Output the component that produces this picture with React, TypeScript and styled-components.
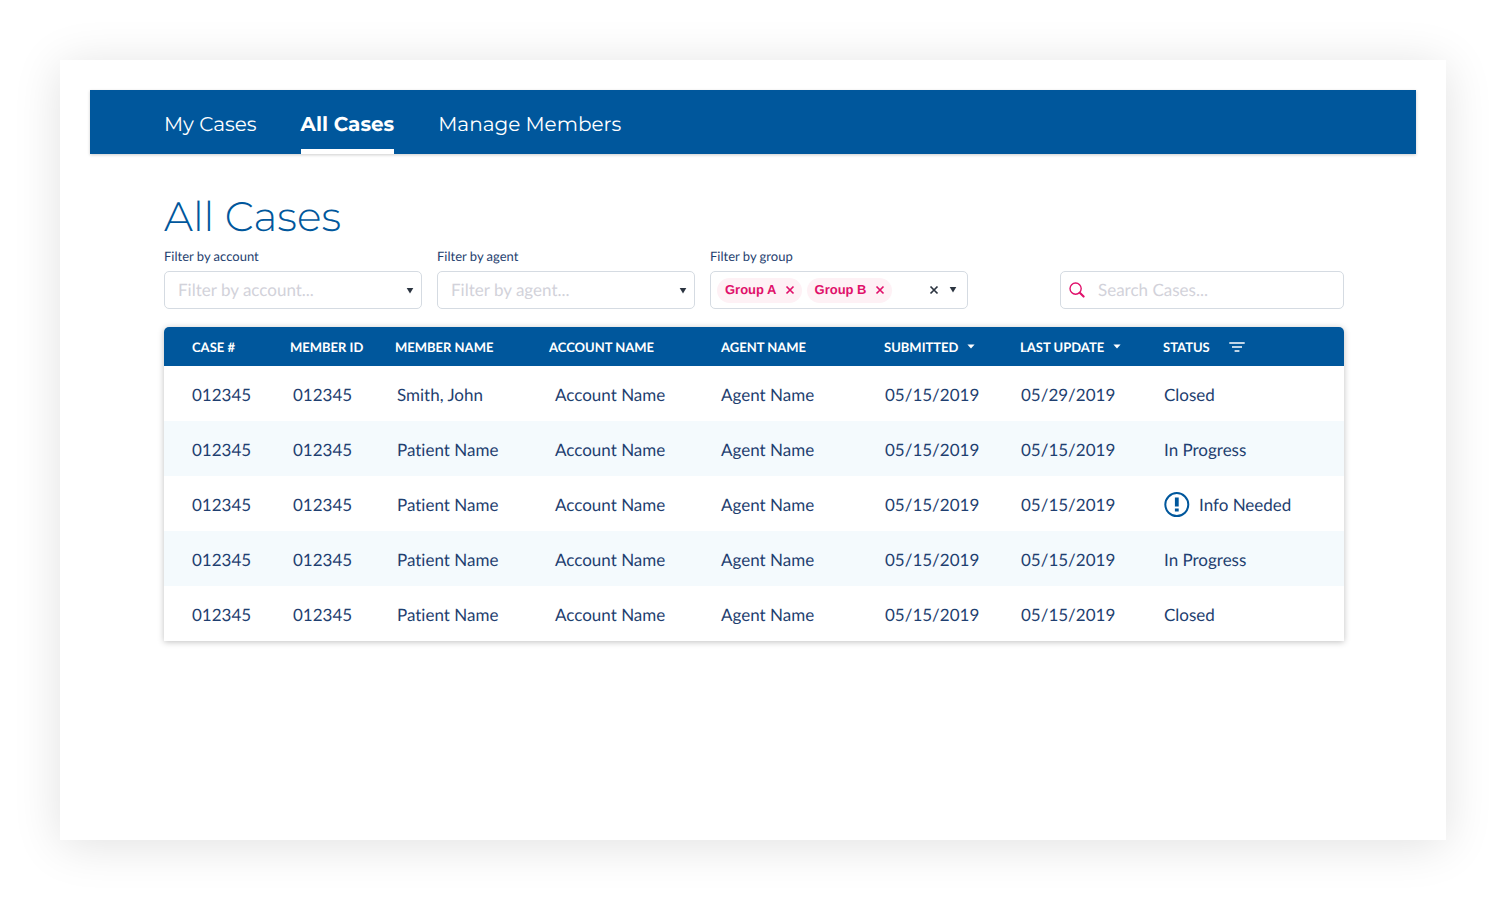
import React, { useState } from "react";
import styled, { createGlobalStyle } from "styled-components";

const color = {
  blue: "#00579c",
  navy: "#1f3f70",
  pink: "#e0116b",
  blush: "#fef1f5",
  border: "#d5dbe2",
  hint: "#d2d2da",
  stripe: "#f4fafd",
  ink: "#2b3440",
};

const heading = `Montserrat, Inter, "Open Sans", sans-serif`;
const text = `Lato, "Open Sans", sans-serif`;

const GlobalStyle = createGlobalStyle`
  * { box-sizing: border-box; }
  body {
    margin: 0;
    background: #fff;
    color: ${color.navy};
    font-family: ${text};
    font-variant-ligatures: none;
    text-rendering: geometricPrecision;
  }
  button, input, select { font: inherit; color: inherit; text-rendering: inherit; }
`;

const Page = styled.div`
  min-height: 100vh;
  padding: 60px;
  display: flex;
`;

const Sheet = styled.div`
  flex: 1;
  min-width: 0;
  padding: 30px;
  background: #fff;
  box-shadow: 0 5px 45px rgba(0, 0, 0, 0.12);
`;

const NavBar = styled.nav`
  display: flex;
  gap: 44px;
  height: 64px;
  padding-left: 74px;
  background: ${color.blue};
  box-shadow: 0 1px 3px rgba(0, 0, 0, 0.2);
`;

const NavLink = styled.a<{ $active?: boolean }>`
  display: flex;
  align-items: center;
  padding-top: 10px;
  border-bottom: 5px solid ${(p) => (p.$active ? "#fff" : "transparent")};
  color: #fff;
  font: ${(p) => (p.$active ? 700 : 400)} 20px/24px ${heading};
  text-decoration: none;
`;

const Main = styled.main`
  padding: 36px 72px 0 74px;
`;

const Title = styled.h1`
  margin: 0;
  color: ${color.blue};
  font: 300 41px/54px ${heading};
`;

const Filters = styled.form`
  display: flex;
  align-items: flex-end;
  gap: 15px;
  padding: 4px 0 18px;
`;

const Field = styled.div`
  display: flex;
  flex-direction: column;
  gap: 7px;
  flex: 0 1 258px;
  min-width: 0;
`;

const Label = styled.label`
  font-size: 13px;
  line-height: 16px;
`;

const Control = styled.div`
  position: relative;
  display: flex;
  align-items: center;
  height: 38px;
  border: 1px solid ${color.border};
  border-radius: 5px;
  background: #fff;
`;

const Select = styled.select`
  width: 100%;
  height: 100%;
  padding: 0 28px 2px 13px;
  border: 0;
  background: transparent;
  appearance: none;
  color: ${color.hint};
  font-size: 17px;
`;

const SelectArrow = styled.svg`
  position: absolute;
  right: 7px;
  top: 15px;
  pointer-events: none;
`;

const Tags = styled.div`
  display: flex;
  gap: 5px;
  flex: 1;
  padding-left: 6px;
`;

const Tag = styled.span`
  display: flex;
  align-items: center;
  gap: 8px;
  height: 25px;
  padding: 0 7px 0 8px;
  border-radius: 13px;
  background: ${color.blush};
  color: ${color.pink};
  font: 700 13px/16px "Liberation Sans", sans-serif;
`;

const IconButton = styled.button`
  display: flex;
  align-items: center;
  padding: 0;
  border: 0;
  background: none;
  color: inherit;
  cursor: pointer;
`;

const TagActions = styled.div`
  display: flex;
  gap: 10px;
  padding-right: 10px;
  color: ${color.ink};
`;

const Search = styled(Control)`
  flex: 0 1 284px;
  margin-left: auto;
  gap: 13px;
  padding: 0 8px;
`;

const SearchInput = styled.input`
  flex: 1;
  min-width: 0;
  padding: 0 0 2px;
  border: 0;
  outline: 0;
  background: transparent;
  font-size: 17px;
  &::placeholder { color: ${color.hint}; opacity: 1; }
`;

const TableCard = styled.div`
  border-radius: 5px 5px 0 0;
  overflow: hidden;
  box-shadow: 0 1px 6px rgba(0, 0, 0, 0.25);
`;

const Table = styled.table`
  width: 100%;
  table-layout: fixed;
  border-collapse: collapse;
`;

const Col = styled.col<{ $width: number }>`
  width: ${(p) => p.$width}px;
`;

const HeadCell = styled.th<{ $first: boolean }>`
  height: 39px;
  padding: 0 0 0 ${(p) => (p.$first ? 28 : 0)}px;
  background: ${color.blue};
  color: #fff;
  font-size: 13px;
  line-height: 16px;
  text-align: left;
  white-space: nowrap;
`;

const HeadContent = styled.span<{ $gap: number }>`
  display: flex;
  align-items: center;
  gap: ${(p) => p.$gap}px;
`;

const Row = styled.tr`
  &:nth-child(even) { background: ${color.stripe}; }
`;

const Cell = styled.td<{ $inset: number }>`
  height: 55px;
  padding: 3px 0 0 ${(p) => p.$inset}px;
  font-size: 17px;
  line-height: 20px;
  white-space: nowrap;
`;

const Status = styled.span`
  display: flex;
  align-items: center;
  gap: 9px;
`;

const Cross = () => (
  <svg width="10" height="10" viewBox="0 0 10 10" stroke="currentColor" strokeWidth="1.7" aria-hidden="true">
    <path d="M1.5 1.5 8.5 8.5M8.5 1.5 1.5 8.5" />
  </svg>
);

const arrowPath = "M.7 1H7.3L4 6.6Z";

const FilterSelect = ({ id, label, hint }: { id: string; label: string; hint: string }) => (
  <Field>
    <Label htmlFor={id}>{label}</Label>
    <Control>
      <Select id={id}>
        <option>{hint}</option>
      </Select>
      <SelectArrow width="8" height="8" viewBox="0 0 8 8" fill={color.ink} aria-hidden="true">
        <path d={arrowPath} />
      </SelectArrow>
    </Control>
  </Field>
);

const GroupFilter = () => {
  const [groups, setGroups] = useState(["Group A", "Group B"]);
  return (
    <Field role="group" aria-labelledby="group-label">
      <Label as="span" id="group-label">Filter by group</Label>
      <Control>
        <Tags>
          {groups.map((g) => (
            <Tag key={g}>
              {g}
              <IconButton type="button" aria-label={`Remove ${g}`} onClick={() => setGroups(groups.filter((x) => x !== g))}>
                <Cross />
              </IconButton>
            </Tag>
          ))}
        </Tags>
        <TagActions>
          <IconButton type="button" aria-label="Clear groups" onClick={() => setGroups([])}>
            <Cross />
          </IconButton>
          <IconButton type="button" aria-label="Show groups">
            <svg width="8" height="8" viewBox="0 0 8 8" fill="currentColor" aria-hidden="true">
              <path d={arrowPath} />
            </svg>
          </IconButton>
        </TagActions>
      </Control>
    </Field>
  );
};

const SearchIcon = () => (
  <svg width="16" height="16" viewBox="0 0 16 16" fill="none" stroke={color.pink} strokeLinecap="round" aria-hidden="true">
    <circle cx="6.6" cy="6.6" r="5.6" strokeWidth="1.4" />
    <path d="M10.8 10.8 14.6 14.6" strokeWidth="2.1" />
  </svg>
);

const InfoIcon = () => (
  <svg width="26" height="26" viewBox="0 0 26 26" aria-hidden="true">
    <circle cx="12.8" cy="12.6" r="11.5" fill="none" stroke={color.blue} strokeWidth="2" />
    <path d="M10.9 5.6h3.8v8.8h-3.8zM10.9 16.4h3.8v3h-3.8z" fill={color.blue} />
  </svg>
);

const SortIcon = () => (
  <svg width="8" height="5" viewBox="0 0 8 5" fill="#fff" aria-hidden="true">
    <path d="M.4.5H7.6L4 4.4Z" />
  </svg>
);

const FilterIcon = () => (
  <svg width="16" height="10" viewBox="0 0 16 10" stroke="#fff" strokeWidth="1.7" aria-hidden="true">
    <path d="M.3 1H15.7M3 5H13M5.6 9H10.4" />
  </svg>
);

type Column = { name: string; width: number; inset: number; action?: "sort" | "filter" };

const columns: Column[] = [
  { name: "CASE #", width: 126, inset: 28 },
  { name: "MEMBER ID", width: 105, inset: 3 },
  { name: "MEMBER NAME", width: 154, inset: 2 },
  { name: "ACCOUNT NAME", width: 172, inset: 6 },
  { name: "AGENT NAME", width: 163, inset: 0 },
  { name: "SUBMITTED", width: 136, inset: 1, action: "sort" },
  { name: "LAST UPDATE", width: 143, inset: 1, action: "sort" },
  { name: "STATUS", width: 181, inset: 1, action: "filter" },
];

const cases = [
  { member: "Smith, John", updated: "05/29/2019", status: "Closed" },
  { member: "Patient Name", updated: "05/15/2019", status: "In Progress" },
  { member: "Patient Name", updated: "05/15/2019", status: "Info Needed" },
  { member: "Patient Name", updated: "05/15/2019", status: "In Progress" },
  { member: "Patient Name", updated: "05/15/2019", status: "Closed" },
];

const CaseTable = () => (
  <TableCard>
    <Table>
      <colgroup>
        {columns.map((c) => <Col key={c.name} $width={c.width} />)}
      </colgroup>
      <thead>
        <tr>
          {columns.map((c, i) => (
            <HeadCell key={c.name} scope="col" $first={i === 0}>
              <HeadContent $gap={c.action === "filter" ? 19 : 9}>
                {c.name}
                {c.action && (
                  <IconButton type="button" aria-label={`${c.action} by ${c.name.toLowerCase()}`}>
                    {c.action === "sort" ? <SortIcon /> : <FilterIcon />}
                  </IconButton>
                )}
              </HeadContent>
            </HeadCell>
          ))}
        </tr>
      </thead>
      <tbody>
        {cases.map((row, r) => (
          <Row key={r}>
            {["012345", "012345", row.member, "Account Name", "Agent Name", "05/15/2019", row.updated].map((value, i) => (
              <Cell key={i} $inset={columns[i].inset}>{value}</Cell>
            ))}
            <Cell $inset={columns[7].inset}>
              <Status>
                {row.status === "Info Needed" && <InfoIcon />}
                {row.status}
              </Status>
            </Cell>
          </Row>
        ))}
      </tbody>
    </Table>
  </TableCard>
);

export default function App() {
  return (
    <Page>
      <GlobalStyle />
      <Sheet>
        <NavBar>
          <NavLink href="#my-cases">My Cases</NavLink>
          <NavLink href="#all-cases" $active aria-current="page">All Cases</NavLink>
          <NavLink href="#members">Manage Members</NavLink>
        </NavBar>
        <Main>
          <Title>All Cases</Title>
          <Filters>
            <FilterSelect id="account" label="Filter by account" hint="Filter by account..." />
            <FilterSelect id="agent" label="Filter by agent" hint="Filter by agent..." />
            <GroupFilter />
            <Search>
              <SearchIcon />
              <SearchInput type="search" aria-label="Search cases" placeholder="Search Cases..." />
            </Search>
          </Filters>
          <CaseTable />
        </Main>
      </Sheet>
    </Page>
  );
}
